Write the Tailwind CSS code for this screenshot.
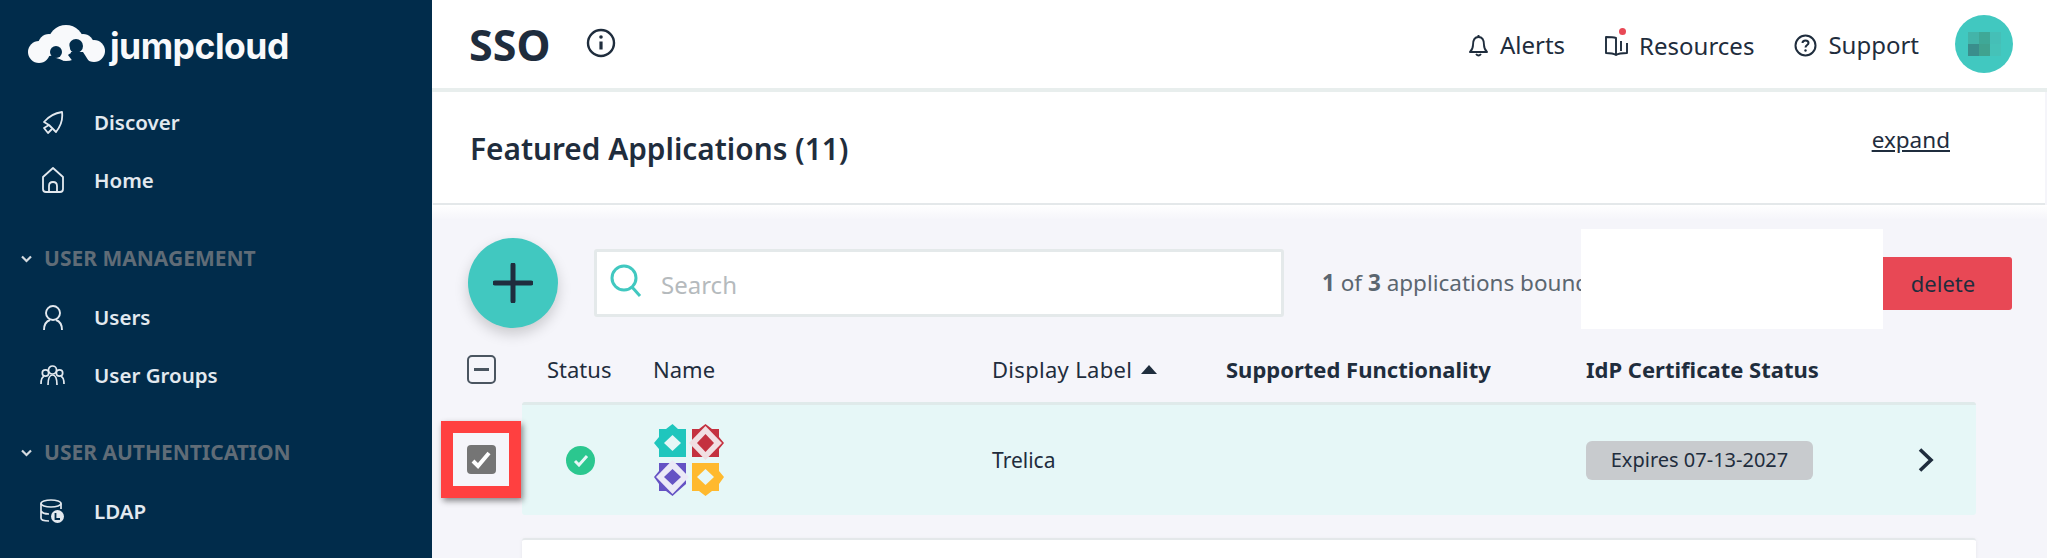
<!DOCTYPE html>
<html lang="en">
  <head>
    <meta charset="UTF-8" />
    <title>SSO - JumpCloud</title>
    <script src="https://cdn.jsdelivr.net/npm/@tailwindcss/browser@4"></script>
  </head>

  <body class="h-[558px] overflow-hidden bg-white font-['Noto_Sans',sans-serif] text-[#1f2d3d]">
    <div class="flex h-[558px]">
      <!-- sidebar -->
      <aside class="w-[432px] shrink-0 bg-[#012c4b] text-[#e3e9ef] overflow-hidden">
        <div class="h-[94px] flex items-start pl-[28px] pt-[25px]">
          <svg class="w-[77px] h-[38px] shrink-0" viewBox="0 0 77 38">
            <g fill="#f8f9fb">
              <circle cx="38" cy="18" r="18" />
              <circle cx="21" cy="20" r="11" />
              <circle cx="11" cy="27" r="11" />
              <circle cx="55" cy="20" r="11" />
              <circle cx="66" cy="26" r="11" />
            </g>
            <g fill="#012c4b">
              <circle cx="28" cy="27" r="6" />
              <path d="M20 38 C21 32 35 32 36 38Z" />
              <circle cx="48" cy="21" r="7" />
              <path d="M40 30 L41 27 H55 L62 38 H46 Z" />
            </g>
            <path d="M36 25 L41 19 L43 28 L38 31 Z" fill="#f8f9fb" />
          </svg>
          <span class="ml-[5px] mt-[2px] font-['Inter',sans-serif] font-bold text-[35.5px] leading-[40px] tracking-[-0.5px] text-[#f8f9fb]">jumpcloud</span>
        </div>

        <a class="h-[57px] flex items-center pl-[42px] text-[20.5px] font-semibold">
          <svg class="w-[22px] h-[24px] mr-[30px]" viewBox="0 0 22 24" fill="none" stroke="#e3e9ef" stroke-width="1.8" stroke-linejoin="round">
            <path d="M20 1 C13 2 7 5 2 11 L7 14 L14 21 C18 16 21 8 20 1Z" />
            <path d="M7 14 L2 17 L6 22 L10 18" />
          </svg>
          Discover
        </a>
        <a class="h-[58px] flex items-center pl-[42px] text-[20.5px] font-semibold">
          <svg class="w-[22px] h-[26px] mr-[30px]" viewBox="0 0 22 26" fill="none" stroke="#e3e9ef" stroke-width="1.8" stroke-linejoin="round">
            <path d="M11 1 L1 10 V22 Q1 25 4 25 H18 Q21 25 21 22 V10 Z" />
            <path d="M7 25 V19 Q7 15 11 15 Q15 15 15 19 V25" />
          </svg>
          Home
        </a>

        <div class="mt-[21px] h-[58px] flex items-center pl-[21px] text-[21px] font-bold text-[#606c77]">
          <svg class="w-[11px] h-[8px] mr-[12px]" viewBox="0 0 11 8" fill="none" stroke="#d5dbe0" stroke-width="2.2"><path d="M1 1.5 L5.5 6 L10 1.5" /></svg>
          USER MANAGEMENT
        </div>
        <a class="h-[58px] flex items-center pl-[43px] text-[20.5px] font-semibold">
          <svg class="w-[20px] h-[25px] mr-[31px]" viewBox="0 0 20 25" fill="none" stroke="#e3e9ef" stroke-width="1.9">
            <circle cx="10" cy="8" r="7" />
            <path d="M1 25 C1 19 4 16 7 15 M19 25 C19 19 16 16 13 15" />
          </svg>
          Users
        </a>
        <a class="h-[58px] flex items-center pl-[40px] text-[20.5px] font-semibold">
          <svg class="w-[25px] h-[21px] mr-[29px]" viewBox="0 0 25 21" fill="none" stroke="#e3e9ef" stroke-width="1.7">
            <circle cx="12.5" cy="5" r="4" />
            <circle cx="5.5" cy="8" r="3.2" />
            <circle cx="19.5" cy="8" r="3.2" />
            <path d="M8 20 C8 13 10 10 12.5 10 C15 10 17 13 17 20" />
            <path d="M1 19 C1 15 2 12 4 11.5 M24 19 C24 15 23 12 21 11.5" />
          </svg>
          User Groups
        </a>

        <div class="mt-[20px] h-[58px] flex items-center pl-[21px] text-[21px] font-bold text-[#606c77]">
          <svg class="w-[11px] h-[8px] mr-[12px]" viewBox="0 0 11 8" fill="none" stroke="#d5dbe0" stroke-width="2.2"><path d="M1 1.5 L5.5 6 L10 1.5" /></svg>
          USER AUTHENTICATION
        </div>
        <a class="h-[58px] flex items-center pl-[40px] text-[20.5px] font-semibold">
          <svg class="w-[24px] h-[24px] mr-[30px]" viewBox="0 0 24 24" fill="none" stroke="#e3e9ef" stroke-width="1.7">
            <ellipse cx="11" cy="4.5" rx="10" ry="3.5" />
            <path d="M1 4.5 V19 C1 21 4 22 9 22 M21 4.5 V10 M1 12 C2 14 5 15 9 15" />
            <circle cx="17.5" cy="17.5" r="6.5" fill="#e3e9ef" stroke="none" />
            <path d="M15.5 14 V20 H20" stroke="#012c4b" stroke-width="1.8" />
          </svg>
          LDAP
        </a>
        <a class="h-[58px] flex items-center pl-[40px] text-[20.5px] font-semibold">
          <svg class="w-[24px] h-[24px]" viewBox="0 0 24 24" fill="none" stroke="#e3e9ef" stroke-width="1.8"><circle cx="12" cy="12" r="10" /></svg>
        </a>
      </aside>

      <!-- main -->
      <main class="relative flex-1 min-w-0 overflow-hidden bg-[#f5f5fa]">
        <header class="h-[92px] bg-white border-b-4 border-[#e8eeed] flex items-start">
          <h1 class="ml-[37px] mt-[20px] text-[43px] leading-[50px] font-bold">SSO</h1>
          <svg class="ml-[36px] mt-[28px] w-[30px] h-[30px]" viewBox="0 0 30 30" fill="none" stroke="#1f2d3d" stroke-width="2.4">
            <circle cx="15" cy="15" r="13" />
            <path d="M15 13.5 V21.5" stroke-width="3.2" />
            <circle cx="15" cy="9" r="1.8" fill="#1f2d3d" stroke="none" />
          </svg>

          <div class="ml-auto flex items-start text-[24px] leading-[30px]">
            <div class="flex items-center mt-[30px]">
              <svg class="w-[19px] h-[23px] mr-[12px]" viewBox="0 0 19 23" fill="none" stroke="#1f2d3d" stroke-width="1.9" stroke-linejoin="round">
                <path d="M9.5 3 C5 3 4 7 4 11 C4 14 3 16 1 18 H18 C16 16 15 14 15 11 C15 7 14 3 9.5 3Z" />
                <path d="M9.5 1 V3 M7 20 Q9.5 23 12 20" />
              </svg>
              Alerts
            </div>
            <div class="relative flex items-center mt-[31px] ml-[40px]">
              <svg class="w-[23px] h-[22px] mr-[11px]" viewBox="0 0 23 22" fill="none" stroke="#1f2d3d" stroke-width="1.9" stroke-linejoin="round">
                <path d="M11 3 C8 2 5 2 1 2 V18 C5 18 8 18 11 20 Z" />
                <path d="M11 20 C14 18 18 18 22 18 V8 M16 6 V16" />
              </svg>
              <span class="absolute left-[14px] top-[-3px] w-[7px] h-[7px] rounded-full bg-[#e84855]"></span>
              Resources
            </div>
            <div class="flex items-center mt-[30px] ml-[40px]">
              <svg class="w-[23px] h-[23px] mr-[11px]" viewBox="0 0 23 23" fill="none" stroke="#1f2d3d" stroke-width="2">
                <circle cx="11.5" cy="11.5" r="10" />
                <path d="M8.5 9 C8.5 5.5 14.5 5.5 14.5 9 C14.5 11 11.5 11 11.5 13.5" />
                <circle cx="11.5" cy="16.5" r="1.2" fill="#1f2d3d" stroke="none" />
              </svg>
              Support
            </div>
            <div class="ml-[36px] mr-[34px] mt-[15px] w-[58px] h-[58px] rounded-full bg-[#41c8c0] flex items-center justify-center">
              <div class="grid grid-cols-3 grid-rows-2 w-[33px] h-[24px]">
                <div class="bg-[#43b4a9]"></div>
                <div class="bg-[#3fa897]"></div>
                <div class="bg-[#45bfb7]"></div>
                <div class="bg-[#3a8e8c]"></div>
                <div class="bg-[#40a28f]"></div>
                <div class="bg-[#45c2b8]"></div>
              </div>
            </div>
          </div>
        </header>

        <section class="h-[113px] ml-[1px] mr-[2px] bg-white border-b-2 border-[#e4e8ea] flex items-start">
          <h2 class="ml-[37px] mt-[38px] text-[29.8px] leading-[38px] font-semibold">Featured Applications (11)</h2>
          <a class="ml-auto mr-[95px] mt-[31px] text-[22.5px] leading-[34px] underline">expand</a>
        </section>
        <div class="h-[15px] bg-gradient-to-b from-white to-[#f5f5fa]"></div>

        <!-- toolbar -->
        <div class="flex items-center h-[90px] mt-[18px] pl-[36px]">
          <button class="w-[90px] h-[90px] rounded-full bg-[#41c8c0] shadow-[0_6px_14px_rgba(0,0,0,0.18)] flex items-center justify-center">
            <svg class="w-[40px] h-[40px]" viewBox="0 0 40 40" stroke="#1f2d3d" stroke-width="5" stroke-linecap="round"><path d="M20 2 V38 M2 20 H38" /></svg>
          </button>
          <div class="ml-[36px] w-[690px] h-[68px] bg-white border-[3px] border-[#e4e9ea] rounded-[3px] flex items-center pl-[13px]">
            <svg class="w-[32px] h-[34px] mb-[4px]" viewBox="0 0 32 34" fill="none" stroke="#41c8c0" stroke-width="3">
              <circle cx="14" cy="14" r="12" />
              <path d="M22 23 L30 32" />
            </svg>
            <span class="ml-[19px] mt-[3px] text-[24px] text-[#b5babd]">Search</span>
          </div>
          <p class="ml-[38px] text-[22.5px] text-[#5b6670] whitespace-nowrap"><b>1</b> of <b>3</b> applications bound</p>
        </div>
        <button class="absolute left-[1440px] top-[257px] w-[140px] h-[53px] pl-[2px] bg-[#e84855] rounded-[3px] text-[22px]">delete</button>
        <!-- redaction block -->
        <div class="absolute left-[1149px] top-[229px] w-[302px] h-[100px] bg-white"></div>

        <!-- table head -->
        <div class="flex items-center h-[74px] pt-[9px] text-[22px]">
          <div class="w-[90px] shrink-0 pl-[35px]">
            <div class="w-[29px] h-[29px] rounded-[5px] border-2 border-[#4a5560] flex items-center justify-center">
              <div class="w-[15px] h-[3px] bg-[#4a5560]"></div>
            </div>
          </div>
          <div class="w-[25px] shrink-0"></div>
          <div class="w-[106px] shrink-0">Status</div>
          <div class="w-[339px] shrink-0">Name</div>
          <div class="w-[234px] shrink-0 flex items-center tracking-[0.3px]">
            Display Label
            <svg class="ml-[9px] w-[16px] h-[9px]" viewBox="0 0 16 9" fill="#1f2d3d"><path d="M8 0 L16 9 H0 Z" /></svg>
          </div>
          <div class="w-[360px] shrink-0 font-bold">Supported Functionality</div>
          <div class="font-bold">IdP Certificate Status</div>
        </div>

        <!-- selected row -->
        <div class="ml-[90px] mr-[71px] h-[113px] bg-[#e6f7f7] border-t-[3px] border-[#dfeaea] rounded-[3px] flex items-center text-[21px]">
          <div class="w-[131px] shrink-0 pl-[44px]">
            <div class="w-[29px] h-[29px] rounded-full bg-[#2bc78f] flex items-center justify-center">
              <svg class="w-[16px] h-[13px]" viewBox="0 0 16 13" fill="none" stroke="#e6f7f7" stroke-width="3"><path d="M2 7 L6 11 L14 2" /></svg>
            </div>
          </div>
          <div class="w-[339px] shrink-0">
            <svg class="w-[72px] h-[72px]" viewBox="0 0 72 72">
              <path d="M6 5 H13 L19.5 0 L25 5 H33 V33 H6 V25 L1 19 L6 13 Z" fill="#1fc6bd" />
              <path d="M19.5 11 L28 19 L19.5 27 L11 19 Z" fill="#e6f7f7" />
              <path d="M39 5 H46 L52.5 0 L59 5 H66 V13 L71 19 L66 25 V33 H39 Z" fill="#c4313f" />
              <path d="M52.5 2 L69 19 L52.5 36 L36 19 Z" fill="#f1dfe2" />
              <path d="M52.5 10 L61 19 L52.5 28 L44 19 Z" fill="#c4313f" />
              <path d="M6 39 H33 V60 L25 67 L19.5 72 L13 67 H6 V60 L1 53 L6 47 Z" fill="#6553c4" />
              <path d="M19.5 36 L36 53 L19.5 70 L3 53 Z" fill="#ebe9f7" />
              <path d="M19.5 45 L28 53 L19.5 61 L11 53 Z" fill="#6553c4" />
              <path d="M39 39 H66 V47 L71 53 L66 60 V67 H59 L52.5 72 L46 67 H39 Z" fill="#ffb92e" />
              <path d="M52.5 45 L61 53 L52.5 61 L44 53 Z" fill="#e6f7f7" />
            </svg>
          </div>
          <div class="w-[594px] shrink-0 mt-[2px]">Trelica</div>
          <div class="w-[227px] h-[39px] shrink-0 rounded-[6px] bg-[#c8cbce] flex items-center justify-center text-[20px] whitespace-nowrap">Expires 07-13-2027</div>
          <svg class="ml-[104px] w-[17px] h-[24px] shrink-0" viewBox="0 0 17 24" fill="none" stroke="#1f2d3d" stroke-width="3.6"><path d="M3 1.5 L14 12 L3 22.5" /></svg>
        </div>

        <div class="ml-[90px] mr-[71px] mt-[23px] h-[60px] bg-white border-t-2 border-[#e4e8ea] rounded-[3px] shadow-[0_1px_4px_rgba(0,0,0,0.06)]"></div>

        <!-- highlighted checkbox callout -->
        <div class="absolute left-[9px] top-[421px] w-[80px] h-[77px] border-[12px] border-[#ff4040] shadow-[2px_3px_6px_rgba(0,0,0,0.45)] flex items-center justify-center">
          <div class="w-[29px] h-[29px] rounded-[4px] bg-[#757575] flex items-center justify-center">
            <svg class="w-[20px] h-[18px]" viewBox="0 0 20 18" fill="none" stroke="#fff" stroke-width="4"><path d="M2 10 L7 15 L18 2" /></svg>
          </div>
        </div>
      </main>
    </div>
  </body>
</html>
